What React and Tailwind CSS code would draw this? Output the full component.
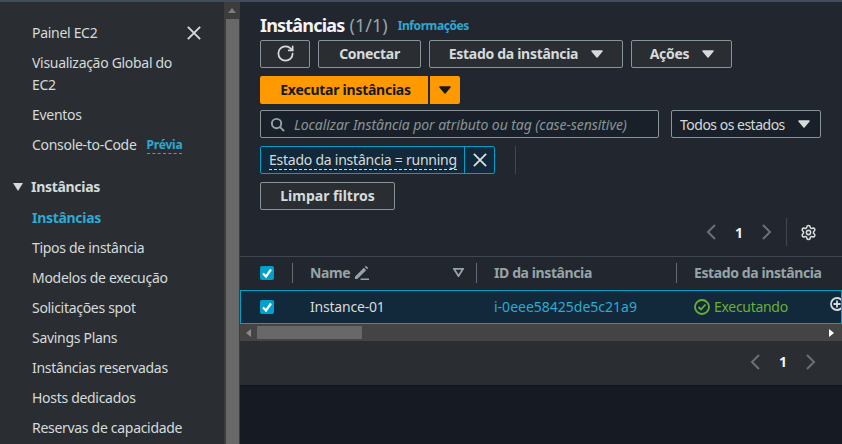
import React from "react";
import { RotateCw, Settings } from "lucide-react";

const Caret = ({ className = "" }) => (
  <svg viewBox="0 0 16 16" className={`w-4 h-4 ${className}`} fill="currentColor" stroke="currentColor" strokeWidth="1.5" strokeLinejoin="round">
    <path d="M3 5h10l-5 6z" />
  </svg>
);

const Chevron = ({ dir }) => (
  <svg viewBox="0 0 16 16" className="w-4 h-4 text-[#687078]" fill="none" stroke="currentColor" strokeWidth="2">
    <path d={dir === "left" ? "M11 1 4 8l7 7" : "M5 1l7 7-7 7"} />
  </svg>
);

const CloseIcon = ({ className = "" }) => (
  <svg viewBox="0 0 16 16" className={className} fill="none" stroke="currentColor" strokeWidth="2.2">
    <path d="M1 1l14 14M15 1 1 15" />
  </svg>
);

const Check = () => (
  <div className="w-[14px] h-[14px] rounded-[2px] bg-[#00a1c9] flex items-center justify-center">
    <svg viewBox="0 0 14 14" className="w-[14px] h-[14px]" fill="none" stroke="white" strokeWidth="2.2">
      <path d="M3 7.5 6 10.5 11 3.5" />
    </svg>
  </div>
);

const Btn = ({ children, className = "" }) => (
  <button className={`h-[28px] pb-[1px] flex items-center justify-center gap-[11px] rounded-[2px] border border-[#879596] bg-[#2a2e33] text-[14px] font-bold text-[#d5dbdb] ${className}`}>
    {children}
  </button>
);

const navItems = [
  "Tipos de instância",
  "Modelos de execução",
  "Solicitações spot",
  "Savings Plans",
  "Instâncias reservadas",
  "Hosts dedicados",
  "Reservas de capacidade",
];

const Sidebar = () => (
  <div className="w-[224px] shrink-0 bg-[#2a2e33] pl-[32px] pr-[22px] pt-[20px] text-[14px] leading-[22px] tracking-[-0.3px] text-[#d5dbdb]">
    <div className="flex flex-col gap-2">
      <div className="flex items-center justify-between">
        <span>Painel EC2</span>
        <CloseIcon className="w-[14px] h-[14px] mr-[1px] text-[#d5dbdb]" />
      </div>
      <div>Visualização Global do<br />EC2</div>
      <div>Eventos</div>
      <div className="flex items-center gap-[10px]">
        <span>Console-to-Code</span>
        <span className="text-[12px] font-bold leading-[16px] tracking-[-0.2px] text-[#2ea9d1] border-b border-dashed border-[#2ea9d1]">Prévia</span>
      </div>
    </div>
    <div className="mt-[20px] -ml-[19px] flex items-center gap-[8px] font-bold">
      <svg viewBox="0 0 10 8" className="w-[10px] h-[8px]" fill="#d5dbdb"><path d="M0 0h10L5 8z" /></svg>
      <span>Instâncias</span>
    </div>
    <div className="mt-[9px] font-bold text-[#2ea9d1]">Instâncias</div>
    <div className="mt-2 flex flex-col gap-2">
      {navItems.map((item) => (
        <div key={item} className="whitespace-nowrap">{item}</div>
      ))}
    </div>
  </div>
);

const SideScroll = () => (
  <div className="w-[16px] shrink-0 bg-[#3c3c3c] flex flex-col items-center">
    <div className="h-[17px] flex items-center justify-center">
      <svg viewBox="0 0 8 5" className="w-[8px] h-[5px]" fill="#7d7d7d"><path d="M4 0l4 5H0z" /></svg>
    </div>
    <div className="flex-1 w-[13px] bg-[#686868]" />
  </div>
);

const Pager = () => (
  <>
    <Chevron dir="left" />
    <span className="mx-[15px] text-[14px] font-bold text-[#f2f3f3]">1</span>
    <Chevron dir="right" />
  </>
);

const Toolbar = () => (
  <div className="px-[20px]">
    <div className="h-[38px] flex items-center pt-[8px]">
      <h1 className="text-[18px] font-bold tracking-[-0.8px] text-[#f2f3f3]">Instâncias</h1>
      <span className="ml-[5px] text-[18px] text-[#95a5a6]">(1/1)</span>
      <span className="ml-[10px] mt-[2px] text-[12px] font-bold tracking-[-0.4px] text-[#2ea9d1]">Informações</span>
    </div>
    <div className="flex gap-2 tracking-[-0.3px]">
      <Btn className="w-[50px]">
        <RotateCw className="w-[19px] h-[19px] text-[#d5dbdb]" strokeWidth={2.2} />
      </Btn>
      <Btn className="w-[103px]">Conectar</Btn>
      <Btn className="w-[194px] pl-[2px]">Estado da instância<Caret /></Btn>
      <Btn className="w-[101px] pl-[3px]">Ações<Caret /></Btn>
    </div>
    <div className="mt-[8px] flex gap-[2px]">
      <button className="w-[168px] h-[28px] pl-[3px] pb-[1px] rounded-l-[2px] bg-[#ff9900] text-[14px] font-bold tracking-[-0.26px] text-[#16191f]">Executar instâncias</button>
      <button className="w-[30px] h-[28px] rounded-r-[2px] bg-[#ff9900] flex items-center justify-center text-[#16191f]"><Caret /></button>
    </div>
    <div className="mt-[6px] flex gap-[12px]">
      <div className="w-[399px] h-[28px] flex items-center gap-[9px] px-[9px] rounded-[2px] border border-[#879596] bg-[#1a2029]">
        <svg viewBox="0 0 16 16" className="w-[15px] h-[15px]" fill="none" stroke="#95a5a6" strokeWidth="2">
          <circle cx="7" cy="7" r="5" />
          <path d="M10.5 10.5 15 15" />
        </svg>
        <span className="text-[14px] italic tracking-[-0.06px] text-[#879596] whitespace-nowrap">Localizar Instância por atributo ou tag (case-sensitive)</span>
      </div>
      <div className="w-[150px] h-[28px] flex items-center justify-between pl-[8px] pr-[8px] rounded-[2px] border border-[#879596] bg-[#1a2029] text-[14px] tracking-[-0.5px] text-[#d5dbdb]">
        <span>Todos os estados</span>
        <Caret />
      </div>
    </div>
    <div className="mt-[8px] flex items-center">
      <div className="w-[235px] h-[28px] flex rounded-[2px] border border-[#00a1c9] bg-[#12293b] text-[14px] tracking-[-0.24px] text-[#d5dbdb]">
        <div className="flex-1 flex items-center pl-[8px] border-r border-[#00a1c9]">
          <span className="leading-[18px] border-b border-dashed border-[#d5dbdb] whitespace-nowrap">Estado da instância = running</span>
        </div>
        <div className="w-[29px] flex items-center justify-center">
          <CloseIcon className="w-[14px] h-[14px]" />
        </div>
      </div>
      <div className="ml-[20px] w-px h-[28px] bg-[#414750]" />
    </div>
    <Btn className="mt-[8px] w-[135px]">Limpar filtros</Btn>
    <div className="h-[46px] pb-[2px] flex items-center justify-end">
      <Pager />
      <div className="ml-[12px] w-px h-[28px] bg-[#414750]" />
      <Settings className="ml-[13px] mr-[5px] w-[17px] h-[17px] text-[#d5dbdb]" strokeWidth={2.2} />
    </div>
  </div>
);

const Table = () => (
  <div className="border-t border-[#414750]">
    <div className="h-[33px] flex items-center text-[14px] font-bold tracking-[-0.4px] text-[#95a5a6]">
      <div className="w-[53px] h-full flex items-center pl-[20px] pb-[2px] relative shrink-0">
        <Check />
        <div className="absolute right-0 top-[6px] w-px h-[20px] bg-[#5f6b7a]" />
      </div>
      <div className="w-[184px] h-full flex items-center justify-between pl-[17px] pr-[13px] pb-[3px] relative shrink-0">
        <span className="flex items-center gap-[4px]">
          Name
          <svg viewBox="0 0 16 16" className="w-[15px] h-[15px]" fill="#95a5a6">
            <path d="M1 12.5 10.5 3l2.5 2.5L3.5 15H1zM11.5 2l1.2-1.2 2.5 2.5L14 4.5zM7 14.5h9V16H7z" />
          </svg>
        </span>
        <svg viewBox="0 0 12 10" className="w-[11px] h-[9px]" fill="none" stroke="#95a5a6" strokeWidth="2"><path d="M1 1h10L6 9z" /></svg>
        <div className="absolute right-0 top-[6px] w-px h-[20px] bg-[#5f6b7a]" />
      </div>
      <div className="w-[200px] h-full flex items-center pl-[17px] pb-[3px] relative shrink-0">
        ID da instância
        <div className="absolute right-0 top-[6px] w-px h-[20px] bg-[#5f6b7a]" />
      </div>
      <div className="flex-1 pl-[17px] pb-[3px] whitespace-nowrap">Estado da instância</div>
    </div>
    <div className="h-[34px] pb-[1px] flex items-center border border-[#00a1c9] bg-[#12293b] text-[14px] text-[#d5dbdb] overflow-hidden">
      <div className="w-[52px] pl-[19px] shrink-0"><Check /></div>
      <div className="w-[184px] pl-[17px] shrink-0 tracking-[-0.2px]">Instance-01</div>
      <div className="w-[200px] pl-[17px] shrink-0 text-[#2ea9d1]">i-0eee58425de5c21a9</div>
      <div className="flex-1 pl-[17px] flex items-center gap-[4px] tracking-[-0.3px] text-[#6aaf35]">
        <svg viewBox="0 0 16 16" className="w-[16px] h-[16px]" fill="none" stroke="currentColor" strokeWidth="1.8">
          <circle cx="8" cy="8" r="7" />
          <path d="M4.5 8 7 10.5 11.5 5.5" />
        </svg>
        Executando
      </div>
      <svg viewBox="0 0 14 14" className="w-[14px] h-[14px] -mr-[3px] -mt-[5px]" fill="none" stroke="#d5dbdb" strokeWidth="1.8">
        <circle cx="7" cy="7" r="6" />
        <path d="M3.5 7h7M7 3.5v7" />
      </svg>
    </div>
    <div className="h-[17px] bg-[#444444] flex items-center">
      <svg viewBox="0 0 5 8" className="ml-[6px] w-[5px] h-[8px]" fill="#8a8a8a"><path d="M5 0v8L0 4z" /></svg>
      <div className="ml-[6px] w-[105px] h-[13px] bg-[#686868]" />
      <svg viewBox="0 0 5 8" className="ml-auto mr-[8px] w-[5px] h-[8px]" fill="#ffffff"><path d="M0 0v8l5-4z" /></svg>
    </div>
    <div className="h-[44px] pb-[3px] bg-[#2a2e33] flex items-center justify-end pr-[24px]">
      <Pager />
    </div>
  </div>
);

export default function App() {
  return (
    <div className="w-[842px] h-[444px] overflow-hidden flex flex-col bg-[#16191f] font-['Noto_Sans',sans-serif]">
      <div className="h-[2px] shrink-0 bg-[#414d5c]" />
      <div className="flex-1 flex min-h-0">
        <Sidebar />
        <SideScroll />
        <div className="flex-1 min-w-0 flex flex-col">
          <div className="bg-[#22262e]">
            <Toolbar />
            <Table />
          </div>
          <div className="flex-1 border-t border-[#0f1217] bg-[#161a22]" />
        </div>
      </div>
    </div>
  );
}
